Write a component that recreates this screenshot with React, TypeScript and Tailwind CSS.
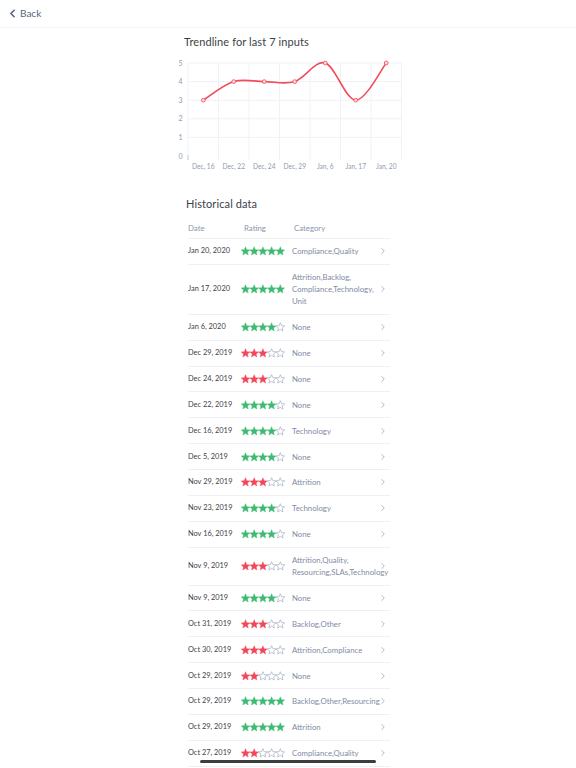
import { ChevronLeft, ChevronRight } from 'lucide-react'

type Row = { date: string; stars: number; cats: string[] }

const rows: Row[] = [
  { date: 'Jan 20, 2020', stars: 5, cats: ['Compliance,Quality'] },
  { date: 'Jan 17, 2020', stars: 5, cats: ['Attrition,Backlog,', 'Compliance,Technology,', 'Unit'] },
  { date: 'Jan 6, 2020', stars: 4, cats: ['None'] },
  { date: 'Dec 29, 2019', stars: 3, cats: ['None'] },
  { date: 'Dec 24, 2019', stars: 3, cats: ['None'] },
  { date: 'Dec 22, 2019', stars: 4, cats: ['None'] },
  { date: 'Dec 16, 2019', stars: 4, cats: ['Technology'] },
  { date: 'Dec 5, 2019', stars: 4, cats: ['None'] },
  { date: 'Nov 29, 2019', stars: 3, cats: ['Attrition'] },
  { date: 'Nov 23, 2019', stars: 4, cats: ['Technology'] },
  { date: 'Nov 16, 2019', stars: 4, cats: ['None'] },
  { date: 'Nov 9, 2019', stars: 3, cats: ['Attrition,Quality,', 'Resourcing,SLAs,Technology'] },
  { date: 'Nov 9, 2019', stars: 4, cats: ['None'] },
  { date: 'Oct 31, 2019', stars: 3, cats: ['Backlog,Other'] },
  { date: 'Oct 30, 2019', stars: 3, cats: ['Attrition,Compliance'] },
  { date: 'Oct 29, 2019', stars: 2, cats: ['None'] },
  { date: 'Oct 29, 2019', stars: 5, cats: ['Backlog,Other,Resourcing'] },
  { date: 'Oct 29, 2019', stars: 5, cats: ['Attrition'] },
  { date: 'Oct 27, 2019', stars: 2, cats: ['Compliance,Quality'] },
]

const trend = [
  { label: 'Dec, 16', v: 3 },
  { label: 'Dec, 22', v: 4 },
  { label: 'Dec, 24', v: 4 },
  { label: 'Dec, 29', v: 4 },
  { label: 'Jan, 6', v: 5 },
  { label: 'Jan, 17', v: 3 },
  { label: 'Jan, 20', v: 5 },
]

const LEFT = 20
const BAND = 30.5
const Y0 = 101
const UNIT = 18.6

function starPath(cx: number, cy: number, r: number) {
  const pts: string[] = []
  for (let i = 0; i < 10; i++) {
    const rad = i % 2 === 0 ? r : r * 0.45
    const a = (Math.PI / 5) * i - Math.PI / 2
    pts.push(`${(cx + rad * Math.cos(a)).toFixed(2)},${(cy + rad * Math.sin(a)).toFixed(2)}`)
  }
  return 'M' + pts.join('L') + 'Z'
}

function Stars({ n }: { n: number }) {
  const color = n >= 4 ? '#3dbb72' : '#f2475a'
  return (
    <svg width="44" height="10" viewBox="0 0 44 10">
      {[0, 1, 2, 3, 4].map((i) => (
        <path
          key={i}
          d={starPath(4.5 + i * 8.7, 5.3, 4.6)}
          fill={i < n ? color : 'none'}
          stroke={i < n ? color : '#a3adbf'}
          strokeWidth={i < n ? 0.4 : 0.7}
          strokeLinejoin="round"
        />
      ))}
    </svg>
  )
}

function Chart() {
  const pts = trend.map((d, i) => ({ x: LEFT + BAND * i + BAND / 2, y: Y0 - d.v * UNIT }))
  let d = `M${pts[0].x},${pts[0].y}`
  for (let i = 0; i < pts.length - 1; i++) {
    const p0 = pts[i - 1] || pts[i]
    const p1 = pts[i]
    const p2 = pts[i + 1]
    const p3 = pts[i + 2] || p2
    const c1x = p1.x + (p2.x - p0.x) / 6
    const c1y = p1.y + (p2.y - p0.y) / 6
    const c2x = p2.x - (p3.x - p1.x) / 6
    const c2y = p2.y - (p3.y - p1.y) / 6
    d += ` C${c1x},${c1y} ${c2x},${c2y} ${p2.x},${p2.y}`
  }
  const right = LEFT + BAND * 7
  return (
    <svg width="240" height="122" viewBox="0 0 240 122" className="block">
      {[1, 2, 3, 4, 5].map((v) => (
        <line key={v} x1={LEFT} x2={right} y1={Y0 - v * UNIT} y2={Y0 - v * UNIT} stroke="#eef1f6" strokeWidth="1" />
      ))}
      {[0, 1, 2, 3, 4, 5, 6, 7].map((k) => (
        <line key={k} x1={LEFT + k * BAND} x2={LEFT + k * BAND} y1={Y0 - 5 * UNIT} y2={Y0 + 4} stroke="#f0f2f7" strokeWidth="1" />
      ))}
      <line x1={LEFT} x2={LEFT} y1={Y0 - 1} y2={Y0 + 4} stroke="#b9c1cf" strokeWidth="0.8" />
      {[0, 1, 2, 3, 4, 5].map((v) => (
        <text key={v} x={14.5} y={Y0 - v * UNIT + 2.5} fontSize="7" fill="#8f9ab0" textAnchor="end" fontFamily="Lato, sans-serif">
          {v}
        </text>
      ))}
      {trend.map((t, i) => (
        <text key={t.label} x={pts[i].x} y={113.5} fontSize="6.6" fill="#8f9ab0" textAnchor="middle" fontFamily="Lato, sans-serif">
          {t.label}
        </text>
      ))}
      <path d={d} fill="none" stroke="#f24b5a" strokeWidth="1.6" strokeLinecap="round" />
      {pts.map((p, i) => (
        <circle key={i} cx={p.x} cy={p.y} r="1.9" fill="#fbd6da" stroke="#f24b5a" strokeWidth="0.8" />
      ))}
    </svg>
  )
}

export default function App() {
  return (
    <div className="min-h-screen bg-white font-['Lato',sans-serif]">
      <div className="h-[28px] flex items-center pl-[6px] border-b border-[#f3f4f7]">
        <ChevronLeft size={13} strokeWidth={3} color="#56667f" />
        <span className="text-[10px] text-[#56667f] ml-[1px]">Back</span>
      </div>

      <div className="w-[240px] mx-auto">
        <div className="pl-[16px] mt-[4px] text-[11px] leading-[20px] text-[#3b3f47] tracking-[0.1px]">
          Trendline for last 7 inputs
        </div>
        <div className="mt-[3px]">
          <Chart />
        </div>
      </div>

      <div className="w-[202px] mx-auto mt-[17px] translate-x-[1px]">
        <div className="-ml-[2px] text-[11px] leading-[20px] text-[#3b3f47] tracking-[0.1px]">Historical data</div>
        <div className="mt-[5px] flex items-center h-[20px] border-b border-[#eef0f4] text-[7.8px] text-[#8a95aa]">
          <div className="w-[56px]">Date</div>
          <div className="w-[50px]">Rating</div>
          <div>Category</div>
        </div>
        {rows.map((r, i) => (
          <div key={i} className="flex items-center py-[6.45px] border-b border-[#eef0f4]">
            <div className="w-[53px] shrink-0 text-[7.4px] leading-[12px] text-[#3f4249]">{r.date}</div>
            <div className="w-[51px] shrink-0 flex items-center">
              <Stars n={r.stars} />
            </div>
            <div className="flex-1 min-w-0 text-[7.8px] leading-[12px] text-[#7f8ba3]">
              {r.cats.map((c, j) => (
                <div key={j} className="whitespace-nowrap">
                  {c}
                </div>
              ))}
            </div>
            <ChevronRight size={10} strokeWidth={1.6} color="#8a95aa" className="shrink-0 mr-[2px]" />
          </div>
        ))}
      </div>

      <div className="fixed bottom-[5px] left-1/2 -translate-x-1/2 w-[176px] h-[3px] rounded-full bg-[#3d3d3d]" />
    </div>
  )
}
